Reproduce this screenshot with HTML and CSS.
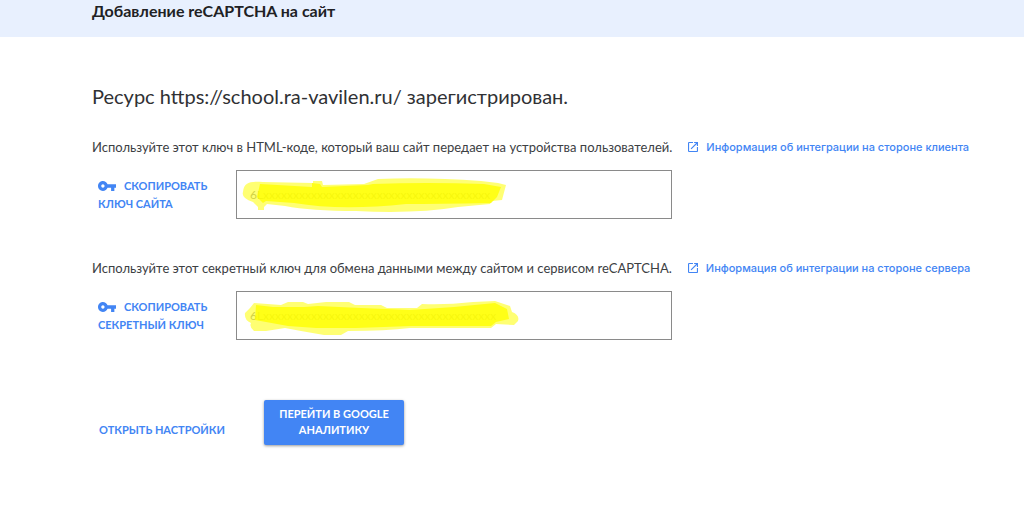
FILE: index.html
```
<!DOCTYPE html>
<html lang="ru">
<head>
<meta charset="utf-8">
<meta name="viewport" content="width=device-width, initial-scale=1">
<title>Добавление reCAPTCHA на сайт</title>
<link rel="stylesheet" href="styles.css">
</head>
<body>
<svg width="0" height="0" class="sprite" aria-hidden="true">
  <symbol id="key" viewBox="1 6 22 12"><path d="M12.65 10C11.83 7.67 9.61 6 7 6c-3.31 0-6 2.69-6 6s2.69 6 6 6c2.61 0 4.83-1.67 5.65-4H17v4h4v-4h2v-4H12.65zM7 14c-1.1 0-2-.9-2-2s.9-2 2-2 2 .9 2 2-.9 2-2 2z"/></symbol>
  <symbol id="open" viewBox="3 3 18 18"><path d="M19 19H5V5h7V3H5a2 2 0 0 0-2 2v14a2 2 0 0 0 2 2h14c1.100 0 2-.9 2-2v-7h-2v7zM14 3v2h3.590l-9.830 9.830 1.410 1.410L19 6.410V10h2V3h-7z"/></symbol>
</svg>
<header class="banner"><h1 class="banner-title">Добавление reCAPTCHA на сайт</h1></header>
<main class="content">
  <h2 class="heading">Ресурс https://school.ra-vavilen.ru/ зарегистрирован.</h2>

  <section class="key-section">
    <div class="intro">
      <label class="description" for="site-key">Используйте этот ключ в HTML-коде, который ваш сайт передает на устройства пользователей.</label>
      <a class="link" href="#"><svg class="open-icon" aria-hidden="true"><use href="#open"/></svg>Информация об интеграции на стороне клиента</a>
    </div>
    <div class="key-row">
      <button class="copy" type="button"><svg class="key-icon" aria-hidden="true"><use href="#key"/></svg>Скопировать ключ сайта</button>
      <div class="field">
        <input class="key-input" id="site-key" type="text" readonly value="6Lxxxxxxxxxxxxxxxxxxxxxxxxxxxxxxxxxxxxxx">
        <svg class="marker" viewBox="0 0 300 48" aria-hidden="true">
          <path class="marker-light" d="M7 22C8 12 14 11 27 12L77 13L77 11H86L87 15L128 14L142 9Q190 7 245 11L262 13L270 15L266 30L256 31L254 34L222 37Q180 44 120 41Q75 41 49 36L31 34L28 37V40H22V37L17 32Q5 28 7 22Z"/>
          <path class="marker-dark" d="M24 14L76 17V13L84 14L86 17L132 15L137 14Q190 12 248 14L265 17L261 27L255 33Q200 34 170 34Q105 41 58 33L30 31L27 33L21 27Z"/>
        </svg>
      </div>
    </div>
  </section>

  <section class="key-section">
    <div class="intro">
      <label class="description" for="secret-key">Используйте этот секретный ключ для обмена данными между сайтом и сервисом reCAPTCHA.</label>
      <a class="link" href="#"><svg class="open-icon" aria-hidden="true"><use href="#open"/></svg>Информация об интеграции на стороне сервера</a>
    </div>
    <div class="key-row">
      <button class="copy" type="button"><svg class="key-icon" aria-hidden="true"><use href="#key"/></svg>Скопировать секретный ключ</button>
      <div class="field">
        <input class="key-input" id="secret-key" type="text" readonly value="6Lxxxxxxxxxxxxxxxxxxxxxxxxxxxxxxxxxxxxxxx">
        <svg class="marker" viewBox="0 0 300 48" aria-hidden="true">
          <path class="marker-light" d="M9 22L14 17L18 12L45 14L52 11H67L72 13L90 11H113L119 14L145 14L151 17H181L186 13Q210 14 237 11L259 10L274 15L276 21Q284 24 282 30L278 34L260 33L255 37L174 37Q150 40 112 40L105 44H88L65 40L49 37L30 40H18Q13 36 15 32Q8 29 9 22Z"/>
          <path class="marker-dark" d="M20 14L37 16L68 16L82 15L125 17L174 19L218 16L259 12L271 18L273 28L260 31L255 35L176 35L120 37L80 37L52 35L19 29Z"/>
        </svg>
      </div>
    </div>
  </section>

  <div class="actions">
    <button class="settings" type="button">Открыть настройки</button>
    <button class="analytics" type="button">Перейти в Google Аналитику</button>
  </div>
</main>
</body>
</html>
```
FILE: styles.css
```
* { box-sizing: border-box; }
body { margin: 0; background: #fff; color: #3c4043; font-family: Lato, "Open Sans", sans-serif; }
button { margin: 0; border: 0; background: none; font: 700 11px/18px Lato, sans-serif; text-transform: uppercase; cursor: pointer; }
.sprite { position: absolute; }
.banner { padding: 0 92px 15px; background: #e8f0fe; }
.banner-title { margin: 0; color: #202124; font-size: 16px; line-height: 22px; font-weight: 700; }
.content { padding: 45px 36px 48px 92px; }
.heading { margin: 0; color: #303134; font-size: 20px; line-height: 28px; font-weight: 400; }
.key-section { margin-top: 27px; }
.key-section + .key-section { margin-top: 39px; }
.intro { display: flex; align-items: center; gap: 16px; min-height: 20px; white-space: nowrap; }
.description { font-size: 13px; line-height: 20px; }
.link { display: flex; align-items: center; gap: 8px; color: #4285f4; font: 500 11px/20px Inter, sans-serif; text-decoration: none; }
.open-icon { width: 10px; height: 10px; fill: currentColor; }
.key-row { display: flex; margin-top: 13px; gap: 14px; }
.copy { width: 130px; padding: 6px; color: #4285f4; text-align: left; }
.key-icon { width: 18px; height: 10px; margin-right: 8px; fill: currentColor; vertical-align: -1px; }
.field { position: relative; flex: 0 1 436px; }
.key-input { display: block; width: 100%; height: 49px; padding: 0 13px; border: 1px solid #8a8a8a; border-radius: 0; background: #fff; color: #999; font: 12px Lato, sans-serif; }
.marker { position: absolute; top: 0; left: 0; width: 300px; height: 48px; pointer-events: none; }
.marker-light { fill: #ffff00; fill-opacity: .55; }
.marker-dark { fill: #ffff00; fill-opacity: .8; }
.actions { display: flex; align-items: flex-end; gap: 32px; margin-top: 60px; }
.settings { width: 140px; padding: 6px 0; color: #4285f4; white-space: nowrap; }
.analytics { width: 140px; padding: 6px 8px 7px; border-radius: 2px; background: #4285f4; box-shadow: 0 1px 3px #0006; color: #fff; line-height: 16px; }
```
